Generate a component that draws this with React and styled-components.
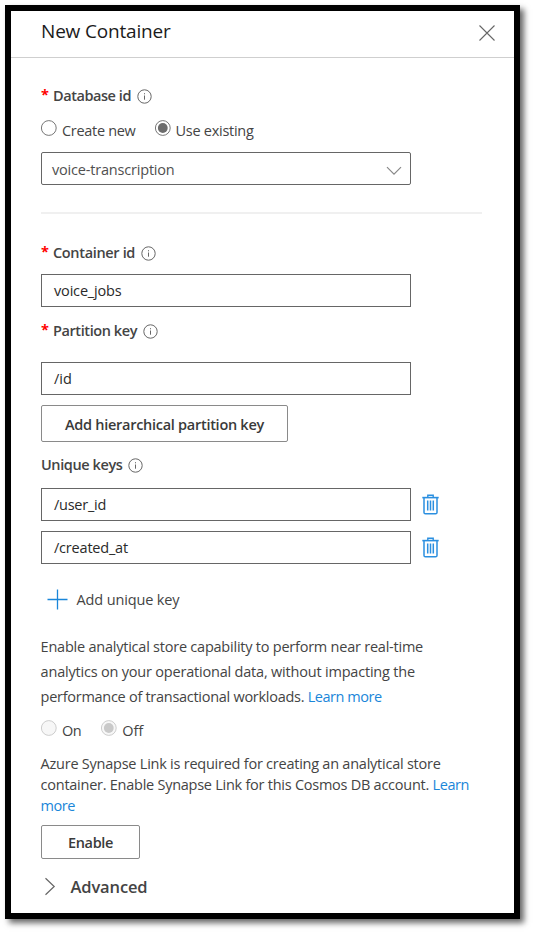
import React from 'react';
import styled, { createGlobalStyle } from 'styled-components';

const GlobalStyle = createGlobalStyle`
  * { box-sizing: border-box; }
  body {
    margin: 0;
    background: #fff;
    font-family: "Open Sans", "Noto Sans", sans-serif;
    font-size: 14.5px;
    color: #444;
  }
`;

const Page = styled.main`
  width: 533px;
  height: 932px;
  padding: 5px 0 0 5px;
  overflow: hidden;
`;

const Panel = styled.section`
  width: 515px;
  height: 914px;
  border: 6px solid #000;
  background: #fff;
  box-shadow: 4px 4px 6px rgba(0, 0, 0, 0.6);
`;

const Header = styled.header`
  display: flex;
  justify-content: space-between;
  height: 47px;
  padding: 7px 18px 0 30px;
  border-bottom: 1px solid #cfcfcf;
`;

const Title = styled.h1`
  margin: 0;
  font-size: 19px;
  font-weight: 400;
  line-height: 27px;
  letter-spacing: -0.18px;
  color: #1b1b1b;
`;

const CloseIcon = styled.svg`
  width: 18px;
  height: 18px;
  margin-top: 6px;
`;

const Body = styled.div`
  display: flex;
  flex-direction: column;
  align-items: flex-start;
  padding-left: 30px;
`;

const Text = styled.span`
  letter-spacing: ${(p) => p.$track || 0}px;
  white-space: pre;
`;

const Label = styled.div`
  display: flex;
  align-items: center;
  height: 20px;
  margin-top: ${(p) => p.$top}px;
  font-weight: 600;
  line-height: 20px;
`;

const Required = styled.span`
  width: 12px;
  height: 20px;
  color: #f00;
  font-weight: 700;
  line-height: 18px;
`;

const InfoSvg = styled.svg`
  width: 15px;
  height: 15px;
  margin-left: 5.5px;
`;

const RadioRow = styled.div`
  display: flex;
  gap: ${(p) => p.$gap}px;
  height: 21px;
  margin-top: ${(p) => p.$top}px;
`;

const RadioOption = styled.label`
  display: flex;
  gap: 5px;
  line-height: 21px;
`;

const RadioSvg = styled.svg`
  width: 16px;
  height: 16px;
`;

const Field = styled.div`
  display: flex;
  align-items: center;
  justify-content: space-between;
  width: 370px;
  height: 33px;
  margin-top: ${(p) => p.$top || 0}px;
  padding: ${(p) => (p.$select ? '2px 8px 0 10px' : '1px 8px 0 12px')};
  border: 1px solid #666;
  border-radius: ${(p) => (p.$select ? 2 : 0)}px;
  line-height: 20px;
  color: ${(p) => (p.$select ? '#505050' : '#2a2a2a')};
`;

const ChevronSvg = styled.svg`
  width: 16px;
  height: 10px;
  margin-top: 2px;
`;

const Divider = styled.hr`
  width: 441px;
  height: 2px;
  margin: 27px 0 0;
  border: 0;
  background: #f0f0f0;
`;

const Button = styled.button`
  width: ${(p) => p.$width}px;
  height: ${(p) => p.$height}px;
  margin: ${(p) => p.$top}px 0 0;
  padding: 3px 0 0;
  border: 1px solid #8a8a8a;
  border-radius: 2px;
  background: #fff;
  font: inherit;
  font-weight: 600;
  line-height: 20px;
  color: #3a3a3a;
`;

const KeyRow = styled.div`
  display: flex;
  align-items: center;
  gap: 11px;
  margin-top: ${(p) => p.$top}px;
`;

const TrashSvg = styled.svg`
  width: 17px;
  height: 21px;
`;

const AddKey = styled.div`
  display: flex;
  align-items: center;
  gap: 9px;
  height: 20px;
  margin-top: 26px;
  padding-left: 5.5px;
  line-height: 20px;
`;

const PlusSvg = styled.svg`
  width: 21px;
  height: 21px;
  margin-top: -2px;
`;

const Paragraph = styled.p`
  display: flex;
  flex-direction: column;
  margin: ${(p) => p.$top}px 0 0 -0.4px;
  line-height: ${(p) => p.$line}px;
`;

const Link = styled.a`
  color: #1a86d9;
  letter-spacing: ${(p) => p.$track}px;
`;

const Accordion = styled.div`
  display: flex;
  align-items: center;
  gap: 14.5px;
  height: 22px;
  margin-top: 17px;
  padding-left: 3px;
  font-size: 16.5px;
  font-weight: 600;
  line-height: 22px;
`;

const ArrowSvg = styled.svg`
  width: 12px;
  height: 19px;
`;

const Info = () => (
  <InfoSvg viewBox="0 0 15 15" fill="none" stroke="#666">
    <circle cx="7.5" cy="7.5" r="6.7" strokeWidth="1" />
    <path d="M7.5 6.5V10.7M7.5 4.2V5.3" strokeWidth="1" />
  </InfoSvg>
);

const Radio = ({ checked, disabled, track, children }) => (
  <RadioOption>
    <RadioSvg viewBox="0 0 16 16">
      <circle
        cx="7.8" cy="8" r="7.4"
        fill={disabled ? '#f7f7f7' : '#fff'}
        stroke={disabled ? '#cdcdcd' : '#777'}
      />
      {checked && <circle cx="7.8" cy="8" r="4.9" fill={disabled ? '#c9c9c9' : '#6c6c6c'} />}
    </RadioSvg>
    <Text $track={track}>{children}</Text>
  </RadioOption>
);

const Trash = () => (
  <TrashSvg viewBox="0 0 17 21" fill="none" stroke="#2b8fe0">
    <path d="M0.3 3.6H16.7" strokeWidth="1.6" />
    <path d="M5.8 3.2V1.2H11.2V3.2" strokeWidth="1.4" />
    <path d="M2 4V18.4Q2 19.8 3.4 19.8H13.6Q15 19.8 15 18.4V4" strokeWidth="1.5" />
    <path d="M5.7 6.5V16.5M8.5 6.5V16.5M11.3 6.5V16.5" strokeWidth="1.5" />
  </TrashSvg>
);

const FieldLabel = ({ required, top, track, children }) => (
  <Label $top={top}>
    {required && <Required>*</Required>}
    <Text $track={track}>{children}</Text>
    <Info />
  </Label>
);

export default function App() {
  return (
    <Page>
      <GlobalStyle />
      <Panel>
        <Header>
          <Title>New Container</Title>
          <CloseIcon viewBox="0 0 18 18" fill="none" stroke="#666" strokeWidth="1.1">
            <path d="M1.5 1.5L16.5 16.5M16.5 1.5L1.5 16.5" />
          </CloseIcon>
        </Header>
        <Body>
          <FieldLabel required top={28} track={-0.44}>Database id</FieldLabel>
          <RadioRow $gap={19} $top={14}>
            <Radio track={-0.31}>Create new</Radio>
            <Radio checked track={-0.27}>Use existing</Radio>
          </RadioRow>
          <Field $top={11} $select>
            <Text $track={-0.19}>voice-transcription</Text>
            <ChevronSvg viewBox="0 0 16 10" fill="none" stroke="#888" strokeWidth="1.2">
              <path d="M1 1.2L8 8.2L15 1.2" />
            </ChevronSvg>
          </Field>
          <Divider />
          <FieldLabel required top={29} track={-0.34}>Container id</FieldLabel>
          <Field $top={11}><Text $track={-0.17}>voice_jobs</Text></Field>
          <FieldLabel required top={14} track={-0.41}>Partition key</FieldLabel>
          <Field $top={21}><Text>/id</Text></Field>
          <Button $width={247} $height={37} $top={10}>
            <Text $track={-0.28}>Add hierarchical partition key</Text>
          </Button>
          <FieldLabel top={13} track={-0.4}>Unique keys</FieldLabel>
          <KeyRow $top={13}>
            <Field><Text $track={-0.26}>/user_id</Text></Field>
            <Trash />
          </KeyRow>
          <KeyRow $top={10}>
            <Field><Text $track={-0.2}>/created_at</Text></Field>
            <Trash />
          </KeyRow>
          <AddKey>
            <PlusSvg viewBox="0 0 21 21" stroke="#1a86d9" strokeWidth="1.3">
              <path d="M10.5 0.5V20.5M0.5 10.5H20.5" />
            </PlusSvg>
            <Text $track={-0.13}>Add unique key</Text>
          </AddKey>
          <Paragraph $top={25} $line={24.8}>
            <Text $track={-0.23}>Enable analytical store capability to perform near real-time</Text>
            <Text $track={-0.2}>analytics on your operational data, without impacting the</Text>
            <Text $track={-0.28}>performance of transactional workloads. <Link $track={-0.45}>Learn more</Link></Text>
          </Paragraph>
          <RadioRow $gap={20} $top={10.6}>
            <Radio disabled track={-0.5}>On</Radio>
            <Radio disabled checked>Off</Radio>
          </RadioRow>
          <Paragraph $top={12} $line={21}>
            <Text $track={-0.24}>Azure Synapse Link is required for creating an analytical store</Text>
            <Text $track={-0.255}>container. Enable Synapse Link for this Cosmos DB account. <Link $track={-0.4}>Learn</Link></Text>
            <Link $track={-0.5}>more</Link>
          </Paragraph>
          <Button $width={99} $height={34} $top={9}>
            <Text $track={-0.36}>Enable</Text>
          </Button>
          <Accordion>
            <ArrowSvg viewBox="0 0 12 19" fill="none" stroke="#666" strokeWidth="1.2">
              <path d="M1.5 1.2L10.2 9.5L1.5 17.8" />
            </ArrowSvg>
            <Text $track={-0.13}>Advanced</Text>
          </Accordion>
        </Body>
      </Panel>
    </Page>
  );
}
